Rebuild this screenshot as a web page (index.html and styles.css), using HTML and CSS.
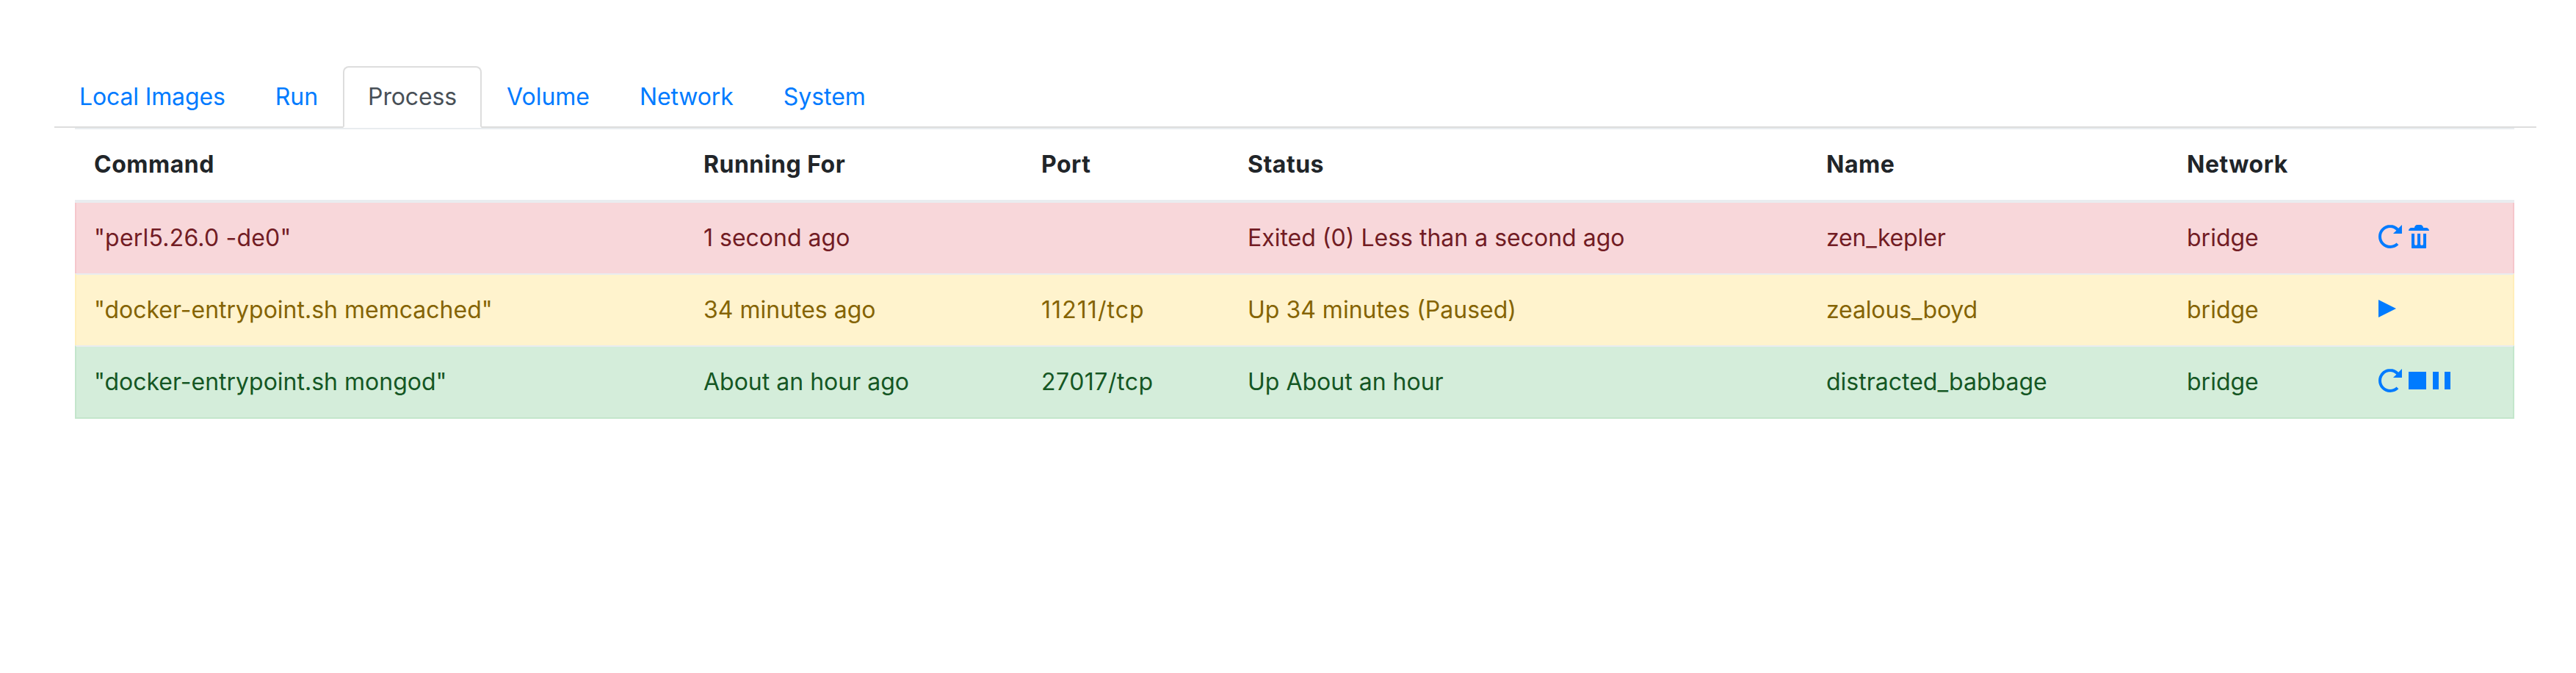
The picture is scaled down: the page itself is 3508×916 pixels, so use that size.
FILE: index.html
```
<!DOCTYPE html>
<html lang="en">
<head>
<meta charset="utf-8">
<title>Docker - Process</title>
<link rel="stylesheet" href="styles.css">
</head>
<body>
<svg class="sprite" aria-hidden="true">
  <symbol id="reload" viewBox="0 0 8 8"><path d="M4 0c-2.2 0-4 1.8-4 4s1.8 4 4 4c1.1 0 2.12-.43 2.84-1.16l-.72-.72c-.54.54-1.29.88-2.13.88-1.66 0-3-1.34-3-3s1.34-3 3-3c.83 0 1.55.36 2.09.91l-1.09 1.09h3v-3l-1.19 1.19c-.72-.72-1.71-1.19-2.81-1.19z"/></symbol>
  <symbol id="trash" viewBox="0 0 7 8"><path d="M3 0c-.55 0-1 .45-1 1h-1c-.55 0-1 .45-1 1h7c0-.55-.45-1-1-1h-1c0-.55-.45-1-1-1h-1zm-2 3v4.81c0 .11.08.19.19.19h4.63c.11 0 .19-.08.19-.19v-4.81h-1v3.5c0 .28-.22.5-.5.5s-.5-.22-.5-.5v-3.5h-1v3.5c0 .28-.22.5-.5.5s-.5-.22-.5-.5v-3.5h-1z"/></symbol>
  <symbol id="play" viewBox="0 0 6 8"><path d="M0 1v6l6-3z"/></symbol>
  <symbol id="stop" viewBox="0 0 6 8"><path d="M0 1h6v6h-6z"/></symbol>
  <symbol id="pause" viewBox="0 0 6 8"><path d="M0 1h2v6h-2zM4 1h2v6h-2z"/></symbol>
</svg>
<main class="container">
  <nav class="tabs">
    <a class="tab tab-tight">Local Images</a>
    <a class="tab">Run</a>
    <a class="tab tab-tight active">Process</a>
    <a class="tab">Volume</a>
    <a class="tab tab-tight">Network</a>
    <a class="tab">System</a>
  </nav>
  <section class="pane">
    <table class="table">
      <colgroup>
        <col class="c-command"><col class="c-running"><col class="c-port"><col class="c-status"><col class="c-name"><col class="c-network"><col class="c-actions">
      </colgroup>
      <thead>
        <tr><th>Command</th><th>Running For</th><th>Port</th><th>Status</th><th>Name</th><th>Network</th><th></th></tr>
      </thead>
      <tbody>
        <tr class="danger">
          <td class="loose">"perl5.26.0 -de0"</td><td>1 second ago</td><td></td><td>Exited (0) Less than a second ago</td><td class="name">zen_kepler</td><td>bridge</td>
          <td><div class="actions"><svg class="icon"><use href="#reload"/></svg><svg class="icon icon-7"><use href="#trash"/></svg></div></td>
        </tr>
        <tr class="warning">
          <td>"docker-entrypoint.sh memcached"</td><td>34 minutes ago</td><td class="port">11211/tcp</td><td>Up 34 minutes (Paused)</td><td class="name">zealous_boyd</td><td>bridge</td>
          <td><div class="actions"><svg class="icon icon-6"><use href="#play"/></svg></div></td>
        </tr>
        <tr class="success">
          <td>"docker-entrypoint.sh mongod"</td><td>About an hour ago</td><td class="port">27017/tcp</td><td>Up About an hour</td><td>distracted_babbage</td><td>bridge</td>
          <td><div class="actions"><svg class="icon"><use href="#reload"/></svg><svg class="icon icon-6"><use href="#stop"/></svg><svg class="icon icon-6"><use href="#pause"/></svg></div></td>
        </tr>
      </tbody>
    </table>
  </section>
</main>
</body>
</html>
```
FILE: styles.css
```
* { box-sizing: border-box; }

body {
  margin: 0;
  background: #fff;
  color: #212529;
  font: 400 32px/48px Inter, "Liberation Sans", sans-serif;
}

.sprite { display: none; }

.container { padding: 90px 54px 0 74px; }

/* Tabs */
.tabs {
  display: flex;
  height: 84px;
  border-bottom: 2px solid #ddd;
}

.tab {
  height: 84px;
  padding: 16px 32px;
  border: 2px solid transparent;
  border-radius: 8px 8px 0 0;
  color: #007bff;
  white-space: nowrap;
}

.tab-tight { letter-spacing: -0.14px; }

.tab.active {
  color: #495057;
  background: #fff;
  border-color: #ddd #ddd #fff;
}

/* Process table */
.pane { padding: 0 30px 0 28px; }

.table {
  width: 3322px;
  table-layout: fixed;
  border-collapse: separate;
  border-spacing: 0;
}

.c-command { width: 832px; }
.c-running { width: 460px; }
.c-port { width: 281px; }
.c-status { width: 788px; }
.c-name { width: 491px; }
.c-network { width: 261px; }
.c-actions { width: 209px; }

th, td {
  padding: 24px;
  border: 0 solid #e9ecef;
  text-align: left;
  vertical-align: top;
  white-space: nowrap;
}

th {
  border-width: 2px 0 4px;
  font-weight: 700;
  letter-spacing: 0.5px;
}

th:first-child { padding-left: 26px; }

td:first-child {
  padding-left: 24px;
  border-left: 2px solid var(--edge);
}

td:last-child { border-right: 2px solid var(--edge); }

tbody tr + tr td { border-top-width: 2px; }

tbody tr:last-child td { border-bottom: 2px solid var(--edge); }

.danger { --edge: #f5c6cb; }
.danger td { background: #f8d7da; color: #721c24; }
.warning { --edge: #ffeeba; }
.warning td { background: #fff3cd; color: #856404; }
.success { --edge: #c3e6cb; }
.success td { background: #d4edda; color: #155724; }

.loose { letter-spacing: 0.2px; }
.warning .port { letter-spacing: 1.06px; }
.success .port { letter-spacing: 0.5px; }
.name { letter-spacing: -0.14px; }

/* Row actions */
.actions {
  display: flex;
  gap: 9px;
  height: 48px;
  padding-top: 6px;
  color: #007bff;
}

.icon { width: 32px; height: 32px; fill: currentColor; }
.icon-7 { width: 28px; }
.icon-6 { width: 24px; }
```
